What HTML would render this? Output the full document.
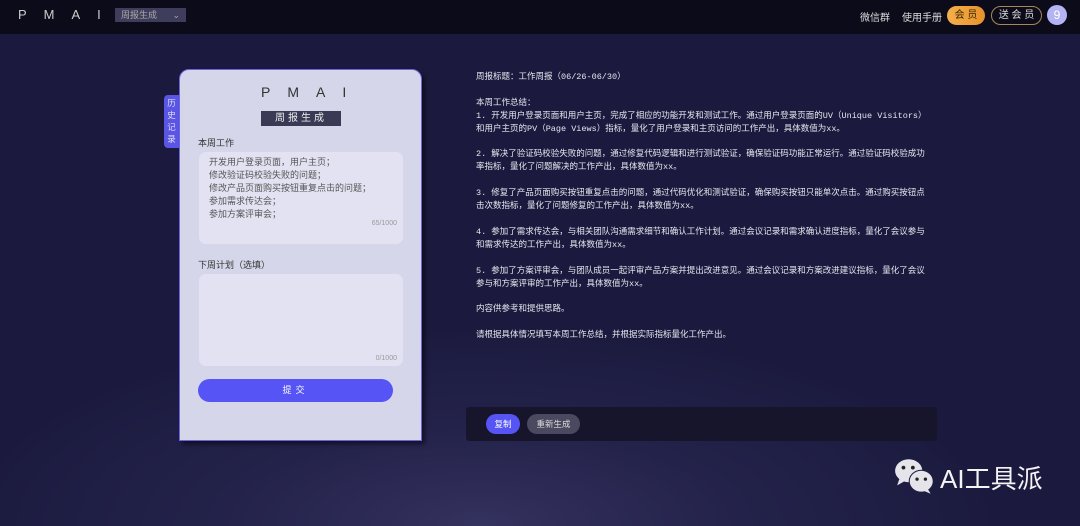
<!DOCTYPE html><html><head><meta charset="utf-8"><style>
*{margin:0;padding:0;box-sizing:border-box}
body{width:1080px;height:526px;overflow:hidden;font-family:"Liberation Sans","Noto Sans CJK SC",sans-serif;background:radial-gradient(ellipse 520px 200px at 480px 526px,#34325e 0%,#23224a 50%,#1b1a3e 100%);position:relative;color:#fff}
.top{position:absolute;left:0;top:0;width:1080px;height:34px;background:#0c0b1a}
.abs{position:absolute}
.logo{left:18px;top:7px;font-size:13px;letter-spacing:17px;color:#ccc;font-weight:300}
.sel{left:115px;top:8px;width:71px;height:14px;background:#3e3d5c;font-size:9px;color:#aaa;padding-left:6px;line-height:14px}
.nav{font-size:10px;color:#ddd;top:9px}
.card{left:179px;top:69px;width:243px;height:372px;background:#d6d6ea;border:1.5px solid #6b66e0;border-radius:10px 10px 0 0;box-shadow:3px 3px 4px rgba(0,0,0,.5)}
.ta{position:absolute;left:19px;width:204px;background:#e3e2f2;border-radius:7px;font-size:9px;color:#555;line-height:13px;padding:3px 10px}
.txt{left:476px;top:71px;font-size:8.5px;line-height:12.9px;color:#e6e6ee;font-family:"Liberation Mono","Noto Sans CJK SC",monospace;white-space:pre}
</style></head><body>
<div class="top"></div>
<div class="abs logo">PMAI</div>
<div class="abs sel">周报生成<span style="position:absolute;right:6px;top:0">⌄</span></div>
<div class="abs nav" style="left:860px">微信群</div>
<div class="abs nav" style="left:902px">使用手册</div>
<div class="abs" style="left:947px;top:6px;width:38px;height:19px;border-radius:10px;background:linear-gradient(90deg,#f4b04c,#e8922a);color:#3a2500;font-size:10px;text-align:center;line-height:19px">会 员</div>
<div class="abs" style="left:991px;top:6px;width:51px;height:19px;border-radius:10px;border:1px solid #a88855;color:#ddd;font-size:10px;text-align:center;line-height:17px">送 会 员</div>
<div class="abs" style="left:1047px;top:5px;width:20px;height:20px;border-radius:50%;background:#b4b4f4;color:#fff;font-size:12px;text-align:center;line-height:20px">9</div>

<div class="abs" style="left:164px;top:95px;width:15px;height:53px;background:#5a55e6;border-radius:4px 0 0 4px;font-size:8.5px;color:#dde;line-height:12px;text-align:center;padding-top:2px">历<br>史<br>记<br>录</div>
<div class="abs card">
<div class="abs" style="left:81px;top:14px;font-size:14px;letter-spacing:17px;color:#333;font-weight:300">PMAI</div>
<div class="abs" style="left:81px;top:41px;width:80px;height:15px;background:#3a3a55;color:#eee;font-size:10px;text-align:center;line-height:15px;letter-spacing:3px">周报生成</div>
<div class="abs" style="left:18px;top:66px;font-size:9px;color:#333">本周工作</div>
<div class="ta" style="top:82px;height:92px;padding-top:4px">开发用户登录页面，用户主页；<br>修改验证码校验失败的问题；<br>修改产品页面购买按钮重复点击的问题；<br>参加需求传达会；<br>参加方案评审会；<div style="position:absolute;right:6px;bottom:14px;font-size:7px;color:#999">65/1000</div></div>
<div class="abs" style="left:18px;top:188px;font-size:9px;color:#333">下周计划（选填）</div>
<div class="ta" style="top:204px;height:92px"><div style="position:absolute;right:6px;bottom:-3px;font-size:7px;color:#999;line-height:20px">0/1000</div></div>
<div class="abs" style="left:18px;top:309px;width:195px;height:23px;border-radius:12px;background:#5654f5;color:#fff;font-size:9px;text-align:center;line-height:23px;letter-spacing:4px">提交</div>
</div>

<div class="abs txt">周报标题：工作周报（06/26-06/30）

本周工作总结：
1. 开发用户登录页面和用户主页，完成了相应的功能开发和测试工作。通过用户登录页面的UV（Unique Visitors）
和用户主页的PV（Page Views）指标，量化了用户登录和主页访问的工作产出，具体数值为xx。

2. 解决了验证码校验失败的问题，通过修复代码逻辑和进行测试验证，确保验证码功能正常运行。通过验证码校验成功
率指标，量化了问题解决的工作产出，具体数值为xx。

3. 修复了产品页面购买按钮重复点击的问题，通过代码优化和测试验证，确保购买按钮只能单次点击。通过购买按钮点
击次数指标，量化了问题修复的工作产出，具体数值为xx。

4. 参加了需求传达会，与相关团队沟通需求细节和确认工作计划。通过会议记录和需求确认进度指标，量化了会议参与
和需求传达的工作产出，具体数值为xx。

5. 参加了方案评审会，与团队成员一起评审产品方案并提出改进意见。通过会议记录和方案改进建议指标，量化了会议
参与和方案评审的工作产出，具体数值为xx。

内容供参考和提供思路。

请根据具体情况填写本周工作总结，并根据实际指标量化工作产出。</div>

<div class="abs" style="left:466px;top:407px;width:471px;height:34px;background:#16152c;border-radius:3px"></div>
<div class="abs" style="left:486px;top:414px;width:34px;height:20px;border-radius:10px;background:#5654f5;font-size:8.5px;text-align:center;line-height:20px">复制</div>
<div class="abs" style="left:527px;top:414px;width:53px;height:20px;border-radius:10px;background:#4a4960;font-size:8.5px;text-align:center;line-height:20px;color:#ddd">重新生成</div>

<svg class="abs" style="left:893px;top:457px" width="46" height="38" viewBox="0 0 44 36">
<ellipse cx="15" cy="13" rx="13" ry="11" fill="#e4e4ea"/><path d="M6 21 L4 27 L11 23Z" fill="#e4e4ea"/>
<circle cx="10" cy="10" r="1.8" fill="#222"/><circle cx="19" cy="10" r="1.8" fill="#222"/>
<ellipse cx="27" cy="23" rx="12" ry="11" fill="#1f1e40"/>
<ellipse cx="27" cy="23" rx="11" ry="10" fill="#e4e4ea"/><path d="M33 30 L36 35 L29 32Z" fill="#e4e4ea"/>
<circle cx="23" cy="21" r="1.6" fill="#222"/><circle cx="31" cy="21" r="1.6" fill="#222"/>
</svg>
<div class="abs" style="left:940px;top:459px;font-size:26px;color:#f4f4f4">AI工具派</div>
</body></html>
